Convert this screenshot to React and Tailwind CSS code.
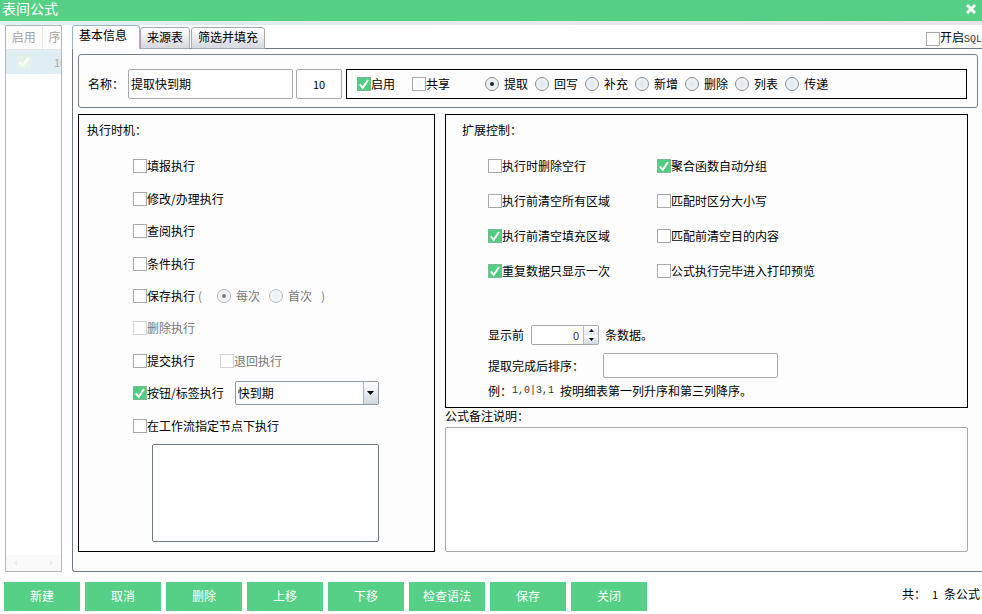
import { useState } from 'react';

const TABS = ['基本信息', '来源表', '筛选并填充'];
const MODES = ['提取', '回写', '补充', '新增', '删除', '列表', '传递'];
const ACTIONS = ['新建', '取消', '删除', '上移', '下移', '检查语法', '保存', '关闭'];

// left column, then right column of each row
const OPTIONS = [
  { label: '执行时删除空行' },
  { label: '聚合函数自动分组', checked: true },
  { label: '执行前清空所有区域' },
  { label: '匹配时区分大小写' },
  { label: '执行前清空填充区域', checked: true },
  { label: '匹配前清空目的内容' },
  { label: '重复数据只显示一次', checked: true },
  { label: '公式执行完毕进入打印预览' },
];

const Check = ({ label, checked = false, disabled = false }) => (
  <label className={`inline-flex items-center whitespace-nowrap ${disabled ? 'text-[#777777]' : 'text-black'}`}>
    <span className="relative w-[14px] h-[14px] shrink-0">
      <input
        type="checkbox"
        defaultChecked={checked}
        disabled={disabled}
        className="peer block appearance-none w-[14px] h-[14px] border border-[#a9a9a9] bg-white checked:bg-[#4fcd80] checked:border-[#7fb898] disabled:border-[#d4d4d4]"
      />
      <svg viewBox="0 0 14 14" className="absolute inset-0 hidden peer-checked:block pointer-events-none" fill="none" stroke="white" strokeWidth="2">
        <path d="M2.8 7.4 L5.7 10.8 L11 3" />
      </svg>
    </span>
    <span>{label}</span>
  </label>
);

const Radio = ({ name, label, checked = false, disabled = false }) => (
  <label className={`inline-flex items-center gap-[5px] whitespace-nowrap ${disabled ? 'text-[#777777]' : 'text-black'}`}>
    <span className={`relative w-[14px] h-[14px] shrink-0 ${disabled ? 'opacity-60' : ''}`}>
      <input
        type="radio"
        name={name}
        defaultChecked={checked}
        disabled={disabled}
        className="peer block appearance-none w-[14px] h-[14px] rounded-full border border-[#858d94] bg-radial from-[#dde6ec] to-[#f8fafb]"
      />
      <span className="absolute inset-[5px] rounded-full bg-[#222] hidden peer-checked:block pointer-events-none"></span>
    </span>
    <span>{label}</span>
  </label>
);

const FormulaList = () => (
  <aside className="w-[57px] shrink-0 border border-[#b4b8bb] bg-white overflow-hidden flex flex-col justify-between">
    <table className="w-[90px] table-fixed text-[#a5a5a5]">
      <thead>
        <tr className="h-[23px] bg-[#fcfcfc]">
          <th className="w-9 font-normal border-r border-b border-[#e2e6e8]">启用</th>
          <th className="font-normal text-left pl-[6px] border-b border-[#e2e6e8]">序号</th>
        </tr>
      </thead>
      <tbody>
        <tr className="h-[25px] bg-[#dfeef5]">
          <td>
            <svg viewBox="0 0 14 14" className="w-[14px] h-[14px] mx-auto bg-[#e3f3ea]" fill="none" stroke="#fdfff0" strokeWidth="2">
              <path d="M2.5 7.5 L5.5 11 L11.5 3" />
            </svg>
          </td>
          <td className="pl-3 text-[11px]">10</td>
        </tr>
      </tbody>
    </table>
    <div className="h-4 bg-[#fafafa] flex items-center justify-between px-2">
      <svg viewBox="0 0 3 6" className="w-[3px] h-[6px]" fill="#eaeef0"><path d="M3 0v6L0 3z" /></svg>
      <svg viewBox="0 0 3 6" className="w-[3px] h-[6px]" fill="#eaeef0"><path d="M0 0v6l3-3z" /></svg>
    </div>
  </aside>
);

const TimingGroup = () => (
  <section className="w-[357px] shrink-0 border border-black flex flex-col pt-[7px] pb-[9px]">
    <h2 className="pl-2">执行时机：</h2>
    <div className="flex-1 grid auto-rows-fr items-center mt-3 mb-[2px] pl-[54px]">
      <div className="flex"><Check label="填报执行" /></div>
      <div className="flex"><Check label="修改/办理执行" /></div>
      <div className="flex"><Check label="查阅执行" /></div>
      <div className="flex"><Check label="条件执行" /></div>
      <div className="flex items-center">
        <Check label="保存执行" />
        <span className="text-[#777777] pl-[3px] w-[22px]">(</span>
        <div className="flex gap-[9px]">
          <Radio name="saveTime" label="每次" checked disabled />
          <Radio name="saveTime" label="首次" disabled />
        </div>
        <span className="text-[#777777] pl-[9px]">)</span>
      </div>
      <div className="flex"><Check label="删除执行" disabled /></div>
      <div className="flex gap-[25px]">
        <Check label="提交执行" />
        <Check label="退回执行" disabled />
      </div>
      <div className="flex items-center gap-[11px]">
        <Check label="按钮/标签执行" checked />
        <div className="relative w-36 h-6">
          <select aria-label="按钮/标签" className="appearance-none block w-full h-full pl-[2px] border border-[#8d979e] rounded-[2px] bg-white text-black">
            <option>快到期</option>
          </select>
          <span className="absolute right-px top-px bottom-px w-[15px] border-l border-[#a9b3bb] bg-linear-to-b from-white to-[#cfd8e2] flex items-center justify-center pointer-events-none">
            <svg viewBox="0 0 7 4" className="w-[7px] h-1"><path d="M0 0h7L3.5 4z" /></svg>
          </span>
        </div>
      </div>
      <div className="flex"><Check label="在工作流指定节点下执行" /></div>
    </div>
    <textarea aria-label="工作流节点" className="block h-[98px] ml-[73px] mr-[55px] border border-[#6d7a86] rounded-[2px] bg-white resize-none"></textarea>
  </section>
);

const ExtendGroup = () => {
  const [limit, setLimit] = useState(0);

  return (
    <section className="border border-black pt-[7px] pb-2">
      <h2 className="pl-4">扩展控制：</h2>
      <div className="mt-[10px] pl-[42px] grid grid-cols-[169px_1fr] auto-rows-[35px] items-center">
        {OPTIONS.map((opt) => (
          <div key={opt.label} className="flex"><Check label={opt.label} checked={opt.checked} /></div>
        ))}
      </div>

      <div className="mt-[37px] pl-[42px]">
        <div className="flex items-center h-5">
          <label htmlFor="limit" className="w-[43px]">显示前</label>
          <div className="flex w-[68px] h-5 border border-[#a3a9ad] rounded-[2px] bg-white">
            <input
              id="limit"
              value={limit}
              onChange={(e) => setLimit(Number(e.target.value) || 0)}
              className="flex-1 min-w-0 text-right pr-1 text-[11px] text-[#333]"
            />
            <div className="w-[15px] flex flex-col border-l border-[#b4bcc4]">
              <button aria-label="增加" onClick={() => setLimit(limit + 1)} className="flex-1 flex items-center justify-center bg-linear-to-b from-white to-[#dde4ec]">
                <svg viewBox="0 0 5 3" className="w-[5px] h-[3px]"><path d="M0 3h5L2.5 0z" /></svg>
              </button>
              <button aria-label="减少" onClick={() => setLimit(Math.max(0, limit - 1))} className="flex-1 flex items-center justify-center bg-linear-to-b from-white to-[#cfd8e2]">
                <svg viewBox="0 0 5 3" className="w-[5px] h-[3px]"><path d="M0 0h5L2.5 3z" /></svg>
              </button>
            </div>
          </div>
          <span className="pl-[6px]">条数据。</span>
        </div>
        <div className="flex items-center mt-2">
          <label htmlFor="order" className="w-[115px]">提取完成后排序：</label>
          <input id="order" className="w-[175px] h-[25px] px-[2px] border border-[#a3a9ad] rounded-[2px] bg-white" />
        </div>
        <p className="mt-[5px] flex items-center">
          <span className="w-6">例：</span>
          <span className="w-12 font-['Liberation_Mono'] text-[10px] text-[#333]">1,0|3,1</span>
          <span>按明细表第一列升序和第三列降序。</span>
        </p>
      </div>
    </section>
  );
};

const App = () => {
  const [tab, setTab] = useState(0);

  return (
    <div className="h-screen flex flex-col overflow-hidden bg-white text-black text-[12px] leading-4 font-['Noto_Sans_CJK_SC',sans-serif]">
      <header className="h-[21px] shrink-0 bg-[#55d086] flex items-start justify-between pl-[2px] pr-[6px] text-white">
        <h1 className="text-sm leading-4">表间公式</h1>
        <button aria-label="关闭窗口" className="pt-1">
          <svg viewBox="0 0 10 10" className="block w-[10px] h-[10px]" stroke="white" strokeWidth="3"><path d="M1 1 L9 9 M9 1 L1 9" /></svg>
        </button>
      </header>
      <div className="h-1 shrink-0 bg-linear-to-r from-[#dff0ee] to-[#e9e4e9]"></div>

      <div className="flex-1 min-h-0 flex pl-[5px] gap-[10px]">
        <FormulaList />

        <main className="flex-1 min-w-0 flex flex-col">
          {/* Tab bar */}
          <div className="flex items-end justify-between h-6 shrink-0 -mb-px relative">
            <div className="flex items-end h-full">
              {TABS.map((name, i) => (
                <button
                  key={name}
                  onClick={() => setTab(i)}
                  className={`px-[6px] border rounded-t-[3px] whitespace-nowrap ${
                    i === tab
                      ? 'h-6 pr-3 pb-1 bg-white border-[#8fb9c4] border-b-white'
                      : 'h-[22px] mr-px pb-[2px] bg-linear-to-b from-white to-[#d5d8df] border-[#a4a9ae]'
                  }`}
                >
                  {name}
                </button>
              ))}
            </div>
            <div className="w-14 h-5 overflow-hidden">
              <Check label={<>开启<span className="font-['Liberation_Mono'] text-[10px] text-[#333]">SQL</span></>} />
            </div>
          </div>

          <div className="flex-1 min-h-0 flex flex-col gap-[6px] border border-r-0 border-[#6d7a86] rounded-bl-[3px] bg-[#fdfdfe] pt-[5px] pl-[5px] pb-[19px]">
            {/* Name row */}
            <div className="mr-1 h-[54px] shrink-0 flex items-center pt-[6px] pl-[9px] pr-[10px] pb-[1px] border border-[#75808a] rounded-[3px]">
              <label htmlFor="name" className="w-10">名称：</label>
              <input id="name" defaultValue="提取快到期" className="w-[165px] h-[30px] px-[2px] mr-[3px] border border-[#a3a9ad] rounded-[2px] bg-white" />
              <input aria-label="序号" defaultValue="10" className="w-[46px] h-[30px] mr-1 text-center text-[11px] border border-[#a3a9ad] rounded-[2px] bg-white" />
              <div className="flex-1 h-[30px] flex items-center pl-[10px] border border-black">
                <div className="flex gap-[17px] mr-[35px]">
                  <Check label="启用" checked />
                  <Check label="共享" />
                </div>
                <div className="flex gap-[7px]">
                  {MODES.map((m, i) => <Radio key={m} name="mode" label={m} checked={i === 0} />)}
                </div>
              </div>
            </div>

            <div className="flex-1 min-h-0 flex gap-[10px] mr-[14px]">
              <TimingGroup />
              <div className="flex-1 min-w-0 flex flex-col">
                <ExtendGroup />
                <label htmlFor="remark">公式备注说明：</label>
                <textarea id="remark" className="flex-1 mt-[3px] p-1 border border-[#a9a9a9] rounded-[2px] bg-white resize-none"></textarea>
              </div>
            </div>
          </div>
        </main>
      </div>

      <footer className="shrink-0 flex items-start justify-between pt-[10px] pb-[3px] pl-1 pr-[2px]">
        <div className="flex gap-[5px]">
          {ACTIONS.map((a) => (
            <button key={a} className="w-[76px] h-[29px] pb-px bg-[#55d086] hover:bg-[#48c47a] text-white">{a}</button>
          ))}
        </div>
        <p className="flex pt-1">
          <span className="w-[30px]">共：</span>
          <span className="w-3 text-[11px]">1</span>
          <span>条公式</span>
        </p>
      </footer>
    </div>
  );
};

export default App;
